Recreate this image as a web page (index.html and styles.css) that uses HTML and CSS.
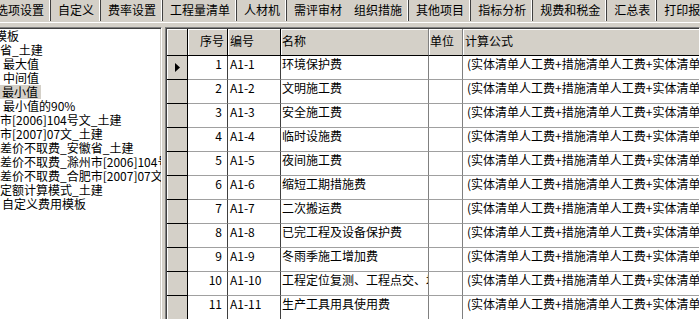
FILE: index.html
```html
<!DOCTYPE html>
<html>
<head>
<meta charset="utf-8">
<link rel="stylesheet" href="styles.css">
</head>
<body>
<div class="tabbar">
  <div class="tab">选项设置</div>
  <div class="tab">自定义</div>
  <div class="tab">费率设置</div>
  <div class="tab">工程量清单</div>
  <div class="tab">人材机</div>
  <div class="tab nosep">需评审材</div>
  <div class="tab active">组织措施</div>
  <div class="tab">其他项目</div>
  <div class="tab">指标分析</div>
  <div class="tab">规费和税金</div>
  <div class="tab">汇总表</div>
  <div class="tab">打印报表</div>
</div>
<div class="main">
  <div class="tree">
    <div class="node l0">模板</div>
    <div class="node l1">省_土建</div>
    <div class="node l2"><span class="lbl">最大值</span></div>
    <div class="node l2"><span class="lbl">中间值</span></div>
    <div class="node l2"><span class="lbl sel">最小值</span></div>
    <div class="node l2"><span class="lbl">最小值的90%</span></div>
    <div class="node l1">市[2006]104号文_土建</div>
    <div class="node l1">市[2007]07文_土建</div>
    <div class="node l1">差价不取费_安徽省_土建</div>
    <div class="node l1">差价不取费_滁州市[2006]104号文_土建</div>
    <div class="node l1">差价不取费_合肥市[2007]07文_土建</div>
    <div class="node l1">定额计算模式_土建</div>
    <div class="node lx">自定义费用模板</div>
  </div>
  <div class="splitter"></div>
  <div class="grid">
    <div class="table">
      <div class="h hi"></div>
      <div class="h hn">序号</div>
      <div class="h hk">编号</div>
      <div class="h hm">名称</div>
      <div class="h hu">单位</div>
      <div class="h hf">计算公式</div>

      <div class="ind"><svg class="arrow" width="6" height="9" viewBox="0 0 6 9"><polygon points="0,0 5,4.5 0,9" fill="#000"/></svg></div>
      <div class="c n">1</div><div class="c k">A1-1</div><div class="c m">环境保护费</div><div class="c u"></div><div class="c f">(实体清单人工费+措施清单人工费+实体清单机械费+措施清单机械费)*费率</div>

      <div class="ind"></div>
      <div class="c n">2</div><div class="c k">A1-2</div><div class="c m">文明施工费</div><div class="c u"></div><div class="c f">(实体清单人工费+措施清单人工费+实体清单机械费+措施清单机械费)*费率</div>

      <div class="ind"></div>
      <div class="c n">3</div><div class="c k">A1-3</div><div class="c m">安全施工费</div><div class="c u"></div><div class="c f">(实体清单人工费+措施清单人工费+实体清单机械费+措施清单机械费)*费率</div>

      <div class="ind"></div>
      <div class="c n">4</div><div class="c k">A1-4</div><div class="c m">临时设施费</div><div class="c u"></div><div class="c f">(实体清单人工费+措施清单人工费+实体清单机械费+措施清单机械费)*费率</div>

      <div class="ind"></div>
      <div class="c n">5</div><div class="c k">A1-5</div><div class="c m">夜间施工费</div><div class="c u"></div><div class="c f">(实体清单人工费+措施清单人工费+实体清单机械费+措施清单机械费)*费率</div>

      <div class="ind"></div>
      <div class="c n">6</div><div class="c k">A1-6</div><div class="c m">缩短工期措施费</div><div class="c u"></div><div class="c f">(实体清单人工费+措施清单人工费+实体清单机械费+措施清单机械费)*费率</div>

      <div class="ind"></div>
      <div class="c n">7</div><div class="c k">A1-7</div><div class="c m">二次搬运费</div><div class="c u"></div><div class="c f">(实体清单人工费+措施清单人工费+实体清单机械费+措施清单机械费)*费率</div>

      <div class="ind"></div>
      <div class="c n">8</div><div class="c k">A1-8</div><div class="c m">已完工程及设备保护费</div><div class="c u"></div><div class="c f">(实体清单人工费+措施清单人工费+实体清单机械费+措施清单机械费)*费率</div>

      <div class="ind"></div>
      <div class="c n">9</div><div class="c k">A1-9</div><div class="c m">冬雨季施工增加费</div><div class="c u"></div><div class="c f">(实体清单人工费+措施清单人工费+实体清单机械费+措施清单机械费)*费率</div>

      <div class="ind"></div>
      <div class="c n">10</div><div class="c k">A1-10</div><div class="c m">工程定位复测、工程点交、场地清理费</div><div class="c u"></div><div class="c f">(实体清单人工费+措施清单人工费+实体清单机械费+措施清单机械费)*费率</div>

      <div class="ind"></div>
      <div class="c n">11</div><div class="c k">A1-11</div><div class="c m">生产工具用具使用费</div><div class="c u"></div><div class="c f">(实体清单人工费+措施清单人工费+实体清单机械费+措施清单机械费)*费率</div>
    </div>
  </div>
</div>
</body>
</html>
```
FILE: styles.css
```css
html, body {
  margin: 0;
  padding: 0;
}
body {
  width: 700px;
  height: 319px;
  overflow: hidden;
  background: #d4d0c8;
  font-family: "Noto Sans CJK SC", sans-serif;
  font-size: 12px;
  color: #000;
}

/* ---------- tab bar ---------- */
.tabbar {
  display: flex;
  height: 22px;
  margin-left: -11px;
  border-bottom: 1px solid #ffffff;
  white-space: nowrap;
}
.tab {
  flex: none;
  height: 21px;
  line-height: 20px;
  padding: 0 7px;
  box-shadow: inset -1px 0 0 #404040, inset -2px 0 0 #ffffff;
}
.tab.nosep {
  padding-right: 5px;
  box-shadow: none;
}

/* ---------- main area ---------- */
.main {
  display: flex;
  margin-top: 4px;
  height: 300px;
}

.tree {
  flex: none;
  width: 161px;
  margin-left: -2px;
  background: #ffffff;
  border: 1px solid;
  border-color: #808080 #ffffff #ffffff #808080;
  box-shadow: inset 1px 1px 0 #404040, inset -1px -1px 0 #d4d0c8;
  padding: 1px 0 0 1px;
  overflow: hidden;
}
.node {
  height: 14px;
  line-height: 14px;
  white-space: nowrap;
  overflow: hidden;
}
.l0 { text-indent: -5px; }
.l1 { padding-left: 0; }
.l2 { padding-left: 0; }
.lx { padding-left: 2px; }
.lbl {
  display: inline-block;
  vertical-align: top;
  height: 14px;
  line-height: 14px;
  padding: 0 3px 0 3px;
}
.lbl.sel {
  background: #d4d0c8;
  padding: 0 3px 0 2px;
}

.splitter {
  flex: none;
  width: 3px;
}

.grid {
  flex: 1;
  min-width: 0;
  border: 1px solid;
  border-color: #808080 #ffffff #ffffff #808080;
  box-shadow: inset 1px 1px 0 #404040;
  padding: 1px 0 0 1px;
  overflow: hidden;
  background: #808080;
}
.table {
  display: grid;
  grid-template-columns: 21px 40px 53px 148px 34px 440px;
  grid-template-rows: 27px;
  grid-auto-rows: 24px;
}
.table > div {
  box-sizing: border-box;
  white-space: nowrap;
  overflow: hidden;
  line-height: 14px;
}

/* header */
.h {
  background: #d4d0c8;
  border-right: 1px solid #404040;
  border-bottom: 1px solid #000000;
  padding-top: 5px;
  box-shadow: inset 1px 1px 0 #ffffff;
}
.hi { border-right-color: #000000; }
.hn { text-align: right; padding-right: 3px; border-right-color: #000000; }
.hk { padding-left: 2px; border-right-color: #000000; }
.hm { padding-left: 1px; border-right-color: #808080; }
.hu { padding-left: 1px; border-right-color: #808080; }
.hf { padding-left: 2px; }

/* indicator */
.ind {
  background: #d4d0c8;
  border-right: 1px solid #000000;
  border-bottom: 1px solid #000000;
  box-shadow: inset 1px 0 0 #ffffff;
  display: flex;
  align-items: center;
  justify-content: center;
  padding-left: 2px;
}
.arrow { display: block; }

/* data cells */
.c {
  background: #ffffff;
  border-right: 1px solid #808080;
  border-bottom: 1px solid #a0a0a0;
  padding-top: 1px;
}
.n { text-align: right; padding-right: 5px; border-right-color: #404040; }
.k { padding-left: 2px; border-right-color: #404040; }
.m { padding-left: 1px; }
.u { padding-left: 1px; }
.f { padding-left: 4px; }
```
